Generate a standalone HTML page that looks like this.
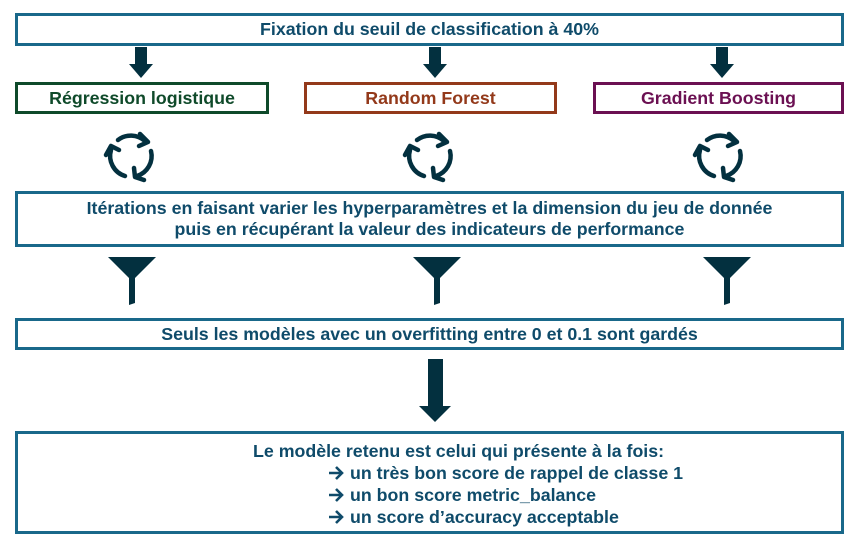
<!DOCTYPE html>
<html><head><meta charset="utf-8"><style>
body{margin:0;width:859px;height:544px;background:#fff;position:relative;overflow:hidden;font-family:"Liberation Sans",sans-serif;font-weight:bold;font-size:17.8px;color:#0f4b6a}
.b{position:absolute;box-sizing:border-box;border:3px solid #19688a;display:flex;align-items:center;justify-content:center;text-align:center;line-height:21px;white-space:nowrap}
.a{position:absolute}
.r{display:inline-block;width:16px;height:14px;margin-right:6px;vertical-align:-1px}
</style></head><body>
<div class="b" style="left:15px;top:13px;width:829px;height:33px">Fixation du seuil de classification à 40%</div>

<svg class="a" style="left:0;top:0" width="859" height="544">
<defs>
<g id="ar"><rect x="-6" y="0" width="12" height="18" fill="#03303f"/><polygon points="-12,17 12,17 0,31" fill="#03303f"/></g>
<g id="fu"><polygon points="-24,0 24,0 3,21 3,46 -3,48 -3,21" fill="#03303f"/></g>
<g id="cy" fill="none" stroke="#03303f" stroke-width="4.5" stroke-linecap="round" stroke-linejoin="round">
<path d="M-13,-16 A21,21 0 0 1 14,-15"/>
<path d="M9,-22 L17,-14 L8,-10" />
<path d="M20,-5 A21,21 0 0 1 6,20"/>
<path d="M3,12 L4,21 L13,24" />
<path d="M-6,20 A21,21 0 0 1 -20,-6"/>
<path d="M-25,-1 L-20,-10 L-12,-6" />
</g>
</defs>
<use href="#ar" x="141" y="47"/>
<use href="#ar" x="435" y="47"/>
<use href="#ar" x="722" y="47"/>
<use href="#cy" x="131" y="156"/>
<use href="#cy" x="430" y="156"/>
<use href="#cy" x="720" y="156"/>
<use href="#fu" x="132" y="257"/>
<use href="#fu" x="437" y="257"/>
<use href="#fu" x="727" y="257"/>
<rect x="428" y="359" width="15" height="48" fill="#03303f"/>
<polygon points="419,406 451,406 435,422" fill="#03303f"/>
</svg>

<div class="b" style="left:15px;top:82px;width:254px;height:32px;border-color:#0f4a2a;color:#0f4a2a">Régression logistique</div>
<div class="b" style="left:304px;top:82px;width:253px;height:32px;border-color:#93391a;color:#93391a">Random Forest</div>
<div class="b" style="left:593px;top:82px;width:251px;height:32px;border-color:#6b1052;color:#6b1052">Gradient Boosting</div>

<div class="b" style="left:15px;top:191px;width:829px;height:56px;line-height:21px">Itérations en faisant varier les hyperparamètres et la dimension du jeu de donnée<br>puis en récupérant la valeur des indicateurs de performance</div>

<div class="b" style="left:15px;top:318px;width:829px;height:32px">Seuls les modèles avec un overfitting entre 0 et 0.1 sont gardés</div>

<div class="b" style="left:15px;top:431px;width:829px;height:103px;display:block;text-align:left">
<div style="position:absolute;left:235px;top:6px;line-height:22px">Le modèle retenu est celui qui présente à la fois:<br>
<span style="padding-left:75px"><svg class="r" viewBox="0 0 16 14"><path d="M1,7 H14 M8,1 L14,7 L8,13" fill="none" stroke="#0f4b6a" stroke-width="2.6"/></svg>un très bon score de rappel de classe 1</span><br>
<span style="padding-left:75px"><svg class="r" viewBox="0 0 16 14"><path d="M1,7 H14 M8,1 L14,7 L8,13" fill="none" stroke="#0f4b6a" stroke-width="2.6"/></svg>un bon score metric_balance</span><br>
<span style="padding-left:75px"><svg class="r" viewBox="0 0 16 14"><path d="M1,7 H14 M8,1 L14,7 L8,13" fill="none" stroke="#0f4b6a" stroke-width="2.6"/></svg>un score d’accuracy acceptable</span></div>
</div>
</body></html>
